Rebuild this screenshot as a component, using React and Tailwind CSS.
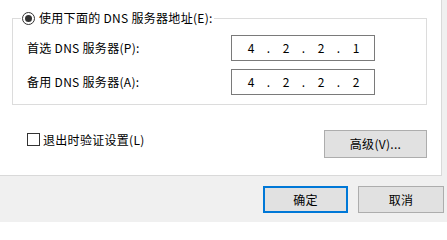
import React from "react";

const font = { fontFamily: '"Noto Sans CJK SC", "Noto Sans", sans-serif' };

const IpBox = ({ parts }) => {
  return (
    <div className="w-[144px] h-[26px] border border-[#7a7a7a] bg-white flex items-center pl-[7px] text-[12px] text-black tracking-normal">
      {parts.map((p, i) => (
        <React.Fragment key={i}>
          {i > 0 && <span className="w-[11px] text-center">.</span>}
          <span className="w-[24px] text-center">{p}</span>
        </React.Fragment>
      ))}
    </div>
  );
};

const App = () => {
  return (
    <div
      className="w-[447px] h-[222px] bg-[#f0f0f0] overflow-hidden text-[12px] text-black tracking-[0.3px]"
      style={font}
    >
      <div className="w-[442px] h-[176px] bg-white border-r border-b border-[#d9d9d9] flex flex-col">
        <fieldset className="ml-[12px] mt-[10px] w-[415px] h-[95px] border border-[#dcdcdc]">
          <legend className="ml-[8px] px-[1px] h-[16px] flex items-center leading-[16px]">
            <span className="w-[13px] h-[13px] rounded-full border border-[#333] flex items-center justify-center mr-[4px]">
              <span className="w-[7px] h-[7px] rounded-full bg-[#333]"></span>
            </span>
            <span>使用下面的 DNS 服务器地址(E):</span>
          </legend>
          <div className="pl-[14px] pt-[9px] flex flex-col gap-[8px]">
            <div className="flex items-center">
              <span className="w-[204px]">首选 DNS 服务器(P):</span>
              <IpBox parts={["4", "2", "2", "1"]} />
            </div>
            <div className="flex items-center">
              <span className="w-[204px]">备用 DNS 服务器(A):</span>
              <IpBox parts={["4", "2", "2", "2"]} />
            </div>
          </div>
        </fieldset>
        <div className="mt-[25px] pl-[27px] pr-[14px] flex justify-between items-start">
          <div className="mt-[3px] flex items-center h-[13px]">
            <span className="w-[13px] h-[13px] border border-[#333] bg-white mr-[3px]"></span>
            <span className="leading-[16px]">退出时验证设置(L)</span>
          </div>
          <button className="w-[103px] h-[28px] bg-[#e1e1e1] border border-[#adadad] text-[12px]">
            高级(V)...
          </button>
        </div>
      </div>
      <div className="flex justify-end gap-[10px] pr-[3px] pt-[10px]">
        <button className="w-[85px] h-[27px] bg-[#e1e1e1] border-2 border-[#0078d7] text-[12px]">
          确定
        </button>
        <button className="w-[86px] h-[27px] bg-[#e1e1e1] border border-[#adadad] text-[12px]">
          取消
        </button>
      </div>
    </div>
  );
};

export default App;
